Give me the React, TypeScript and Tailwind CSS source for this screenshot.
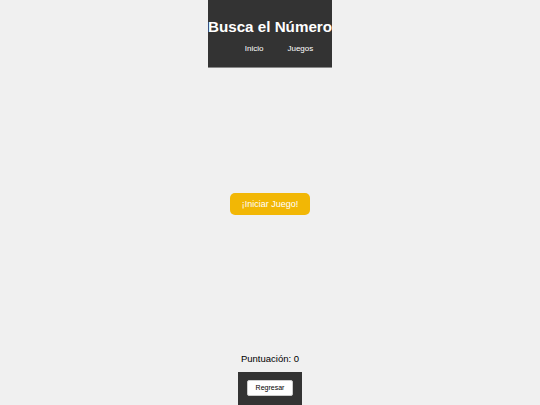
export default function App() {
  return (
    <div
      className="flex h-[405px] flex-col items-center bg-[#f0f0f0]"
      style={{ fontFamily: '"Liberation Sans", Arial, sans-serif' }}
    >
      <header className="w-fit border-b border-[#888] bg-[#333333] pt-[17px] pb-[13px] text-white">
        <h1 className="text-[15.2px] font-bold leading-[20px] whitespace-nowrap">Busca el Número</h1>
        <nav className="mt-[7px] flex justify-center gap-[24px] text-[8px] leading-[10px] font-normal">
          <span className="ml-[18px]">Inicio</span>
          <span>Juegos</span>
        </nav>
      </header>
      <main className="flex flex-1 items-center justify-center pb-[14px]">
        <button className="rounded-[5px] bg-[#f2b705] px-[12px] py-[6px] text-[9px] leading-[10px] text-white">
          ¡Iniciar Juego!
        </button>
      </main>
      <p className="mb-[7px] text-[9.5px] leading-[12px] text-black">Puntuación: 0</p>
      <footer className="bg-[#333333] px-[9px] pt-[8px] pb-[9px]">
        <button className="block rounded-[2px] border border-[#ccc] bg-white px-[8px] py-[3px] text-[7px] leading-[8px] text-black">
          Regresar
        </button>
      </footer>
    </div>
  )
}
